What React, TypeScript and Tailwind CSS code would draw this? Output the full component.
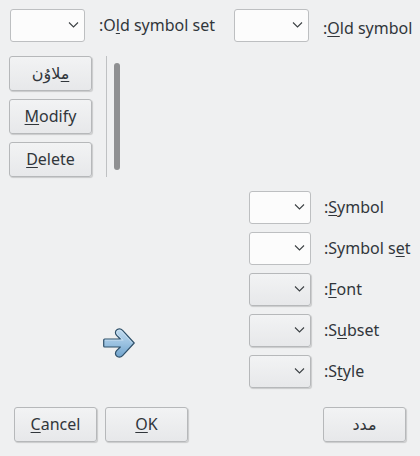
import React from "react";

const raised =
  "rounded-[3px] border border-[#b6b8ba] bg-linear-to-b from-[#f2f3f4] to-[#e7e8ea] shadow-[1px_1px_1px_rgba(0,0,0,0.16)]";

function Key({ children }: { children: React.ReactNode }) {
  return (
    <u className="underline decoration-1 underline-offset-2 [text-decoration-skip-ink:none]">{children}</u>
  );
}

function Push({ children }: { children: React.ReactNode }) {
  return (
    <button type="button" className={`h-[35px] w-[83px] pb-[2px] text-center leading-6 ${raised}`}>
      {children}
    </button>
  );
}

function Combo({ id, flat, wide }: { id: string; flat?: boolean; wide?: boolean }) {
  return (
    <div className={`relative h-[33px] shrink-0 ${wide ? "w-[75px]" : "w-[62px]"}`}>
      <select
        id={id}
        className={`block h-full w-full appearance-none ${
          flat ? "rounded-[3px] border border-[#bdbfc1] bg-[#fcfcfc]" : raised
        }`}
      />
      <svg
        className="pointer-events-none absolute top-3 right-[6px]"
        width="11"
        height="8"
        viewBox="0 0 11 8"
        fill="none"
        stroke="#3c4144"
        strokeWidth="1.1"
      >
        <path d="M1 1.5 L5.5 6 L10 1.5" />
      </svg>
    </div>
  );
}

const fields = [
  { id: "symbol", flat: true, label: <>:<Key>S</Key>ymbol</> },
  { id: "symbol-set", flat: true, label: <>:Symbol s<Key>e</Key>t</> },
  { id: "font", flat: false, label: <>:<Key>F</Key>ont</> },
  { id: "subset", flat: false, label: <>:S<Key>u</Key>bset</> },
  { id: "style", flat: false, label: <>:S<Key>t</Key>yle</> },
];

export default function App() {
  return (
    <main className="min-h-screen bg-[#eff0f1] px-2 pt-[9px] pb-[14px] font-['Noto_Sans','DejaVu_Sans',sans-serif] text-[16px] text-[#31363b]">
      <div className="flex justify-between pl-[2px]">
        <div className="flex items-center gap-[14px]">
          <Combo id="old-set" flat wide />
          <label htmlFor="old-set" className="pb-[2px] leading-7 whitespace-nowrap">
            :O<Key>l</Key>d symbol set
          </label>
        </div>
        <div className="flex gap-[14px]">
          <Combo id="old-symbol" flat wide />
          <label htmlFor="old-symbol" className="w-[89px] self-end leading-7 whitespace-nowrap">
            :<Key>O</Key>ld symbol
          </label>
        </div>
      </div>

      <div className="mt-[14px] flex pl-px">
        <div className="flex flex-col gap-2">
          <Push>
            <Key>م</Key>لاوُن
          </Push>
          <Push>
            <Key>M</Key>odify
          </Push>
          <Push>
            <Key>D</Key>elete
          </Push>
        </div>
        <div className="ml-[14px] border-l border-[#bfc1c3] py-[7px] pl-[7px]">
          <div className="h-full w-[6px] rounded-full bg-[#8f9092]" />
        </div>
      </div>

      <div className="mt-[14px] flex items-end justify-between pl-[95px]">
        <svg className="mb-[29px]" width="32" height="32" viewBox="0 0 32 32" role="img" aria-label="Replace">
          <defs>
            <linearGradient id="arrow" x1="0" y1="0" x2="0" y2="1">
              <stop offset="0" stopColor="#c0daee" />
              <stop offset="0.5" stopColor="#9cc3e2" />
              <stop offset="1" stopColor="#70a3cc" />
            </linearGradient>
          </defs>
          <path
            d="M1.6 12 H17.3 L13.6 8.4 C11.8 6.4 12.2 3.6 14.2 2.5 C16.2 1.4 18.2 1.9 19.6 3.4 L31.2 16 L19.6 28.6 C18.2 30.1 16.2 30.6 14.2 29.5 C12.2 28.4 11.8 25.6 13.6 23.6 L17.3 20 H1.6 Q0.7 20 0.7 19 V13 Q0.7 12 1.6 12 Z"
            fill="url(#arrow)"
            stroke="#2f5069"
            strokeWidth="1.2"
            strokeLinejoin="round"
          />
          <path
            d="M2 13.2 H20.2 L14.6 7.6 C13.4 6 13.6 4.4 14.8 3.6 C16.2 2.8 17.6 3.2 18.6 4.2 L29.4 16"
            fill="none"
            stroke="#d9eaf6"
            strokeOpacity="0.7"
            strokeWidth="0.8"
          />
        </svg>
        <div className="grid grid-cols-[62px_88px] gap-x-[13px] gap-y-2">
          {fields.map((f) => (
            <React.Fragment key={f.id}>
              <Combo id={f.id} flat={f.flat} />
              <label htmlFor={f.id} className="self-center pb-[2px] leading-7 whitespace-nowrap">
                {f.label}
              </label>
            </React.Fragment>
          ))}
        </div>
      </div>

      <div className="mt-[19px] flex justify-between px-[6px]">
        <div className="flex gap-2">
          <Push>
            <Key>C</Key>ancel
          </Push>
          <Push>
            <Key>O</Key>K
          </Push>
        </div>
        <Push>مدد</Push>
      </div>
    </main>
  );
}
